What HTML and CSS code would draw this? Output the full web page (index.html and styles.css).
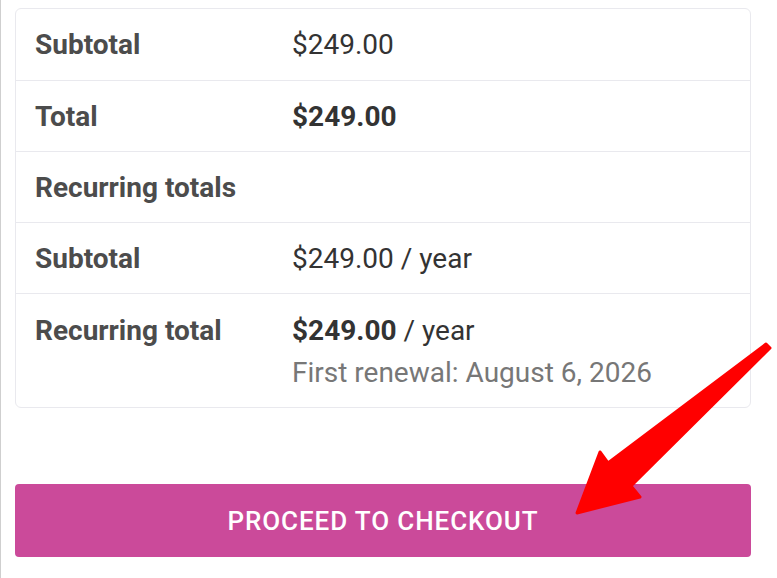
FILE: index.html
```html
<!DOCTYPE html>
<html>
<head>
<meta charset="utf-8">
<link rel="stylesheet" href="styles.css">
</head>
<body>
<div class="page">
  <div class="card">
    <div class="row">
      <div class="label">Subtotal</div>
      <div class="value">$249.00</div>
    </div>
    <div class="row">
      <div class="label">Total</div>
      <div class="value"><strong>$249.00</strong></div>
    </div>
    <div class="row">
      <div class="label">Recurring totals</div>
      <div class="value"></div>
    </div>
    <div class="row">
      <div class="label">Subtotal</div>
      <div class="value">$249.00 / year</div>
    </div>
    <div class="row last">
      <div class="label">Recurring total</div>
      <div class="value">
        <div><strong>$249.00</strong> / year</div>
        <div class="renewal">First renewal: August 6, 2026</div>
      </div>
    </div>
  </div>
  <button class="checkout">PROCEED TO CHECKOUT</button>
</div>
<svg class="arrow" width="777" height="578" viewBox="0 0 777 578">
  <polygon points="766,344 770,348 631,486 640,497 577,513 600,452 608,463" fill="#ff0000" stroke="#ff0000" stroke-width="3" stroke-linejoin="round"/>
</svg>
</body>
</html>
```
FILE: styles.css
```css
html, body {
  margin: 0;
  padding: 0;
  background: #ffffff;
}
body {
  font-family: Roboto, "Liberation Sans", sans-serif;
  width: 777px;
  height: 578px;
  overflow: hidden;
  position: relative;
}
.page {
  border-left: 1px solid #cfcfcf;
  height: 578px;
  box-sizing: border-box;
  padding: 8px 0 0 14px;
}
.card {
  width: 736px;
  box-sizing: border-box;
  border: 1px solid #e9e9ee;
  border-radius: 6px;
}
.row {
  display: flex;
  border-top: 1px solid #e9e9ee;
  padding: 16px 0 14px 0;
  font-size: 28px;
  line-height: 40px;
}
.row:first-child {
  border-top: none;
  padding-top: 16px;
  padding-bottom: 15px;
}
.label {
  width: 257px;
  padding-left: 19px;
  font-weight: 700;
  color: #4c4c4c;
  flex: none;
}
.value {
  color: #333333;
}
.value strong {
  font-weight: 700;
}
.renewal {
  color: #777777;
  line-height: 44px;
}
.row.last {
  padding-top: 17px;
  padding-bottom: 12px;
}
.checkout {
  display: block;
  margin-top: 76px;
  width: 736px;
  height: 73px;
  border: none;
  border-radius: 4px;
  background: #cb4a9a;
  color: #ffffff;
  font-family: Roboto, "Liberation Sans", sans-serif;
  font-size: 26px;
  font-weight: 500;
  letter-spacing: 0.9px;
  padding: 0;
}
.arrow {
  position: absolute;
  left: 0;
  top: 0;
}
```
